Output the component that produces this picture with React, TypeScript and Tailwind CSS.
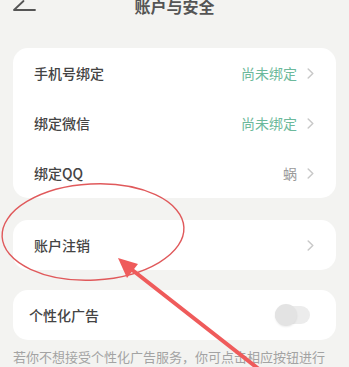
import React from "react";

const Chevron = () => (
  <svg width="7" height="11" viewBox="0 0 7 11" className="ml-[10px]">
    <path d="M1.2 1 L5.8 5.5 L1.2 10" fill="none" stroke="#c9c9c9" strokeWidth="1.5" strokeLinecap="round" strokeLinejoin="round" />
  </svg>
);

const Row = ({ label, value, valueClass }: { label: string; value?: string; valueClass?: string }) => (
  <div className="flex h-[50px] items-center justify-between pl-[21px] pr-[22px]">
    <span className="text-[14px] font-medium text-[#444]">{label}</span>
    <div className="flex items-center">
      {value && <span className={`text-[14px] ${valueClass}`}>{value}</span>}
      <Chevron />
    </div>
  </div>
);

export default function App() {
  return (
    <div
      className="relative h-[367px] w-[349px] overflow-hidden bg-[#f3f3f1]"
      style={{ fontFamily: '"Noto Sans CJK SC", "Noto Sans", sans-serif' }}
    >
      <div className="relative flex h-[12px] items-center justify-center">
        <svg width="24" height="14" viewBox="0 0 24 14" className="absolute left-[12px] top-[-1px]">
          <path d="M2 11 L23 11 M2 11 L11.5 2" fill="none" stroke="#555" strokeWidth="1.8" strokeLinecap="round" />
        </svg>
        <span className="text-[16px] font-semibold leading-[16px] text-[#555]">账户与安全</span>
      </div>

      <div className="mx-[13px] mt-[36px] rounded-[15px] bg-white">
        <Row label="手机号绑定" value="尚未绑定" valueClass="text-[#6cb99b]" />
        <Row label="绑定微信" value="尚未绑定" valueClass="text-[#6cb99b]" />
        <Row label="绑定QQ" value="蜗" valueClass="text-[#9a9a9a]" />
      </div>

      <div className="mx-[13px] mt-[22px] rounded-[15px] bg-white">
        <Row label="账户注销" />
      </div>

      <div className="mx-[13px] mt-[20px] flex h-[50px] items-center justify-between rounded-[15px] bg-white pl-[16px] pr-[26px]">
        <span className="text-[14px] font-medium text-[#444]">个性化广告</span>
        <div className="relative h-[18px] w-[35px] rounded-full bg-[#ececec]">
          <div className="absolute left-0 top-[-2px] h-[22px] w-[22px] rounded-full bg-[#e3e3e3] shadow-[0_1px_2px_rgba(0,0,0,0.08)]" />
        </div>
      </div>

      <p className="mx-[13px] mt-[7px] whitespace-nowrap text-[13px] leading-[20px] text-[#a3a3a3]">
        若你不想接受个性化广告服务，你可点击相应按钮进行
      </p>

      <svg className="pointer-events-none absolute left-0 top-0" width="349" height="367" viewBox="0 0 349 367">
        <ellipse cx="93" cy="232" rx="91" ry="48" fill="none" stroke="#e0595b" strokeWidth="1.4" transform="rotate(-3 93 232)" />
        <path d="M131 269 L260 370" stroke="#ef5b5b" strokeWidth="4" strokeLinecap="round" />
        <polygon points="118,258 138,264 127,278" fill="#ef5b5b" />
      </svg>
    </div>
  );
}
